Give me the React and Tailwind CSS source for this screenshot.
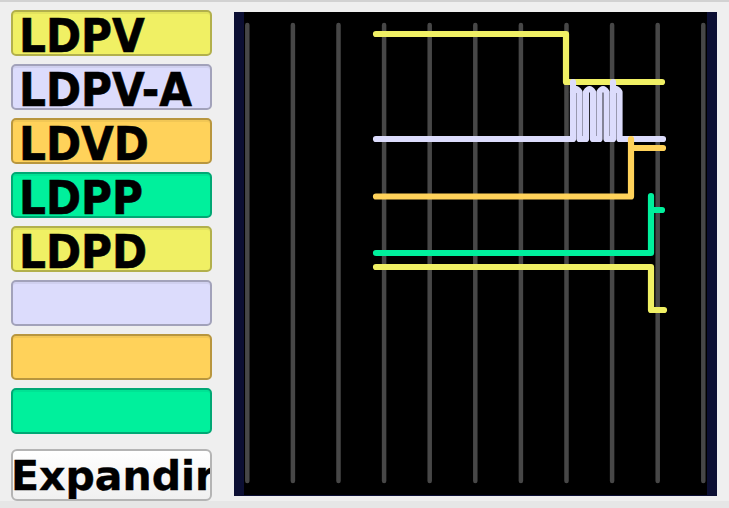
import React from "react";

// Channel buttons on the left, scope-like trace view on the right
const channels = [
    { label: "LDPV", fill: "bg-[#f0f064]", border: "border-[#b2b04c]" },
    { label: "LDPV-A", fill: "bg-[#dcdcfc]", border: "border-[#a2a2ba]" },
    { label: "LDVD", fill: "bg-[#ffd25a]", border: "border-[#b8963e]" },
    { label: "LDPP", fill: "bg-[#00f09c]", border: "border-[#00a874]" },
    { label: "LDPD", fill: "bg-[#f0f064]", border: "border-[#b2b04c]" },
    { label: "", fill: "bg-[#dcdcfc]", border: "border-[#a2a2ba]" },
    { label: "", fill: "bg-[#ffd25a]", border: "border-[#b8963e]" },
    { label: "", fill: "bg-[#00f09c]", border: "border-[#00a874]" },
];

const gridX = Array.from({ length: 11 }, (_, i) => 247.3 + i * 45.6);

const ChannelButton = ({ label, fill, border }) => (
    <div
        className={`h-[46px] rounded-[5px] border-2 ${fill} ${border} pl-[6px] shadow-[inset_0_2px_0_rgba(0,0,0,0.05)]`}
    >
        {label && (
            <span className="block origin-left scale-x-[0.9] whitespace-nowrap text-[47px] leading-[47px] font-bold text-black [-webkit-text-stroke:0.6px_black] font-['DejaVu_Sans',sans-serif]">
                {label}
            </span>
        )}
    </div>
);

const TraceView = () => (
    <svg width="463" height="483" viewBox="244 12 463 483" className="block">
        {/* grid */}
        {gridX.map((x) => (
            <line key={x} x1={x} y1="25" x2={x} y2="481" stroke="#474747" strokeWidth="4.5" strokeLinecap="round" />
        ))}

        <g fill="none" strokeWidth="6.2" strokeLinecap="round" strokeLinejoin="round">
            {/* LDPV */}
            <path d="M376 34 H566 V82 H662" stroke="#f0f064" />
            {/* LDPV-A with pulse burst */}
            <path
                d="M376 139 H573 V82 M573 92 Q576 86 579.5 92 V139 H586 V92 Q589.5 86 593 92 V139 H599.5 V92 Q603 86 606.5 92 V139 H613 V82 M613 92 Q616 86 619.5 92 V139 H663"
                stroke="#dcdcfc"
            />
            {/* LDVD */}
            <path d="M376 196.5 H631 V139 M631 148 H663" stroke="#ffd25a" />
            {/* LDPP */}
            <path d="M376 253 H651 V196 M651 210 H662" stroke="#00f09c" />
            {/* LDPD */}
            <path d="M376 267 H651 V310 H664" stroke="#f0f064" />
        </g>
    </svg>
);

export default function App() {
    return (
        <div className="w-[729px] h-[508px] bg-[#efefef] border-t-2 border-[#d2d2d2] flex flex-col overflow-hidden">
            <div className="flex flex-1 pt-[8px] pl-[11px]">
                {/* Left column */}
                <div className="w-[201px] flex flex-col gap-[8px]">
                    {channels.map((c, i) => (
                        <ChannelButton key={i} {...c} />
                    ))}
                    <div className="mt-[7px] h-[52px] rounded-[6px] border-2 border-[#b4b4b4] bg-gradient-to-b from-[#ffffff] to-[#f0f0f0] overflow-hidden pt-[5px]">
                        <span className="block -ml-[2px] whitespace-nowrap text-[41px] leading-[41px] font-bold text-black [-webkit-text-stroke:0.4px_black] font-['DejaVu_Sans',sans-serif]">
                            Expandir
                        </span>
                    </div>
                </div>

                {/* Trace panel */}
                <div className="ml-[22px] mt-[2px] w-[483px] h-[484px] bg-[#0c0f33] px-[10px] pb-[1px]">
                    <div className="w-[463px] h-[483px] bg-black">
                        <TraceView />
                    </div>
                </div>
            </div>
            <div className="h-[7px] bg-[#e6e6e6]" />
        </div>
    );
}
